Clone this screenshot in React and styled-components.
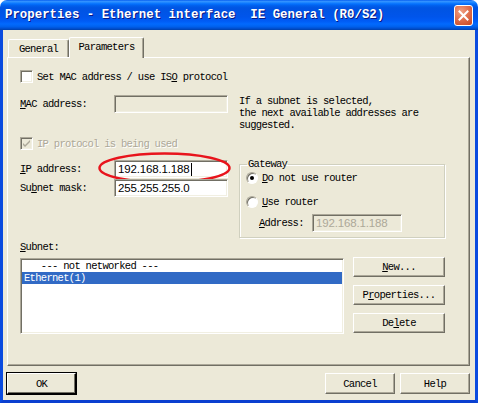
import React from 'react';
import styled, { createGlobalStyle } from 'styled-components';

const GlobalStyle = createGlobalStyle`
  html, body {
    margin: 0;
    padding: 0;
    background: #ffffff;
  }
  * {
    box-sizing: border-box;
  }
`;

const mono = `"Liberation Mono", "DejaVu Sans Mono", monospace`;

const Window = styled.div`
  width: 478px;
  height: 403px;
  display: flex;
  flex-direction: column;
  font-family: ${mono};
  font-size: 10.5px;
  letter-spacing: -0.7px;
  color: #000;
`;

const TitleBar = styled.div`
  height: 30px;
  flex: none;
  display: flex;
  align-items: center;
  justify-content: space-between;
  padding: 0 5px 0 5px;
  border-radius: 7px 7px 0 0;
  background: linear-gradient(
    to bottom,
    #0058ee 0%,
    #3593ff 4%,
    #288eff 7%,
    #127dff 10%,
    #036ffc 14%,
    #0262ee 18%,
    #0057e5 24%,
    #0054e3 30%,
    #0055eb 56%,
    #005bf5 70%,
    #026afe 80%,
    #0062ef 88%,
    #0052d6 94%,
    #0040ab 100%
  );
`;

const Title = styled.span`
  color: #fff;
  font-weight: bold;
  font-size: 12.4px;
  letter-spacing: 0;
  white-space: pre;
  text-shadow: 1px 1px 0 #0a1883;
`;

const CloseButton = styled.div`
  width: 19px;
  height: 21px;
  margin-top: 1px;
  border: 1px solid #fff;
  border-radius: 3px;
  background: radial-gradient(circle at 35% 30%, #f0a184 0%, #e0714f 45%, #c8451f 100%);
  display: flex;
  align-items: center;
  justify-content: center;
`;

const Frame = styled.div`
  flex: 1;
  display: flex;
  flex-direction: column;
  background: #ece9d8;
  border-left: 3px solid #0a4bdf;
  border-right: 3px solid #0a4bdf;
  border-bottom: 3px solid #0a3fd0;
  padding: 7px 5px 0 4px;
`;

const TabRow = styled.div`
  display: flex;
  align-items: flex-end;
  height: 20px;
  margin-left: 1px;
  position: relative;
  z-index: 1;
`;

const Tab = styled.div`
  height: ${(p) => (p.$active ? '21px' : '18px')};
  width: ${(p) => p.$w}px;
  margin-bottom: ${(p) => (p.$active ? '-1px' : '0')};
  padding-top: 3px;
  text-align: center;
  background: #ece9d8;
  border-top: 1px solid #fff;
  border-left: 1px solid #fff;
  border-right: 1px solid #716f64;
  box-shadow: inset -1px 0 0 #aca899;
  border-radius: 2px 2px 0 0;
`;

const Panel = styled.div`
  height: 309px;
  width: 463px;
  border-top: 1px solid #fff;
  border-left: 1px solid #fff;
  border-right: 1px solid #716f64;
  border-bottom: 1px solid #716f64;
  box-shadow: inset -1px -1px 0 #aca899;
  padding: 12px 0 0 12px;
  display: flex;
  flex-direction: column;
`;

const CheckRow = styled.label`
  display: flex;
  align-items: center;
  gap: 4px;
  height: 13px;
  color: ${(p) => (p.$disabled ? '#aca899' : '#000')};
  text-shadow: ${(p) => (p.$disabled ? '1px 1px 0 #fff' : 'none')};
  margin-top: ${(p) => p.$mt || 0}px;
`;

const CheckBox = styled.span`
  width: 13px;
  height: 13px;
  flex: none;
  background: ${(p) => (p.$disabled ? '#ece9d8' : '#fff')};
  border-top: 1px solid #aca899;
  border-left: 1px solid #aca899;
  border-right: 1px solid #fff;
  border-bottom: 1px solid #fff;
  box-shadow: inset 1px 1px 0 #716f64, inset -1px -1px 0 #f1efe2;
  display: flex;
  align-items: center;
  justify-content: center;
`;

const Split = styled.div`
  display: flex;
  margin-top: ${(p) => p.$mt}px;
`;

const LeftCol = styled.div`
  width: 219px;
  flex: none;
  display: flex;
  flex-direction: column;
`;

const FieldRow = styled.div`
  display: flex;
  align-items: center;
  height: 18px;
  margin-top: ${(p) => p.$mt || 0}px;
  margin-left: ${(p) => p.$ml || 0}px;
`;

const Label = styled.span`
  width: ${(p) => p.$w || 94}px;
  flex: none;
`;

const InputWrap = styled.div`
  position: relative;
  width: ${(p) => p.$w}px;
  height: ${(p) => p.$h || 18}px;
`;

const TextBox = styled.div`
  width: 100%;
  height: 100%;
  background: ${(p) => (p.$disabled ? '#ece9d8' : '#fff')};
  color: ${(p) => (p.$disabled ? '#aca899' : '#000')};
  border-top: 1px solid #aca899;
  border-left: 1px solid #aca899;
  border-right: 1px solid #fff;
  border-bottom: 1px solid #fff;
  box-shadow: inset 1px 1px 0 #716f64, inset -1px -1px 0 #f1efe2;
  padding: 0 0 0 3px;
  display: flex;
  align-items: center;
  font-family: "Liberation Sans", Arial, sans-serif;
  font-size: 11.5px;
  letter-spacing: -0.15px;
`;

const Caret = styled.span`
  display: inline-block;
  width: 1px;
  height: 13px;
  background: #000;
  margin-left: 1px;
`;

const Annotation = styled.svg`
  position: absolute;
  left: -16px;
  top: -8px;
  pointer-events: none;
`;

const Hint = styled.div`
  line-height: 12px;
  white-space: pre;
`;

const Group = styled.fieldset`
  margin: 21px 0 0 0;
  width: 206px;
  height: 80px;
  padding: 1px 0 0 6px;
  border: 1px solid #d0d0bf;
  box-shadow: inset 1px 1px 0 #fff, 1px 1px 0 #fff;
  display: flex;
  flex-direction: column;
`;

const Legend = styled.legend`
  padding: 0 1px;
  margin-left: 1px;
  line-height: 12px;
`;

const RadioRow = styled.label`
  display: flex;
  align-items: center;
  gap: 4px;
  height: 14px;
  margin-top: ${(p) => p.$mt || 0}px;
`;

const Radio = styled.span`
  width: 12px;
  height: 12px;
  flex: none;
  border-radius: 50%;
  background: #fff;
  border: 1px solid;
  border-color: #aca899 #fff #fff #aca899;
  box-shadow: inset 1px 1px 0 #716f64;
  display: flex;
  align-items: center;
  justify-content: center;

  &::after {
    content: '';
    width: 4px;
    height: 4px;
    border-radius: 50%;
    background: ${(p) => (p.$on ? '#000' : 'transparent')};
  }
`;

const SubnetLabel = styled.div`
  line-height: 12px;
  margin-top: 3px;
`;

const SubnetArea = styled.div`
  display: flex;
  gap: 9px;
  margin-top: 5px;
`;

const ListBox = styled.div`
  width: 324px;
  height: 76px;
  background: #fff;
  border-top: 1px solid #aca899;
  border-left: 1px solid #aca899;
  border-right: 1px solid #fff;
  border-bottom: 1px solid #fff;
  box-shadow: inset 1px 1px 0 #716f64, inset -1px -1px 0 #f1efe2;
  padding: 1px;
`;

const ListItem = styled.div`
  height: 12px;
  line-height: 12px;
  padding-left: 2px;
  white-space: pre;
  background: ${(p) => (p.$selected ? '#316ac5' : 'transparent')};
  color: ${(p) => (p.$selected ? '#fff' : '#000')};
`;

const ButtonCol = styled.div`
  display: flex;
  flex-direction: column;
  gap: 8px;
  margin-top: -1px;
`;

const Button = styled.div`
  width: ${(p) => p.$w || 92}px;
  height: ${(p) => p.$h || 20}px;
  display: flex;
  align-items: center;
  justify-content: center;
  background: #ece9d8;
  border-top: 1px solid #fff;
  border-left: 1px solid #fff;
  border-right: 1px solid #716f64;
  border-bottom: 1px solid #716f64;
  box-shadow: inset -1px -1px 0 #aca899;
  outline: ${(p) => (p.$default ? '1px solid #000' : 'none')};
  outline-offset: 0;
  ${(p) =>
    p.$default &&
    `border-right-color: #000; border-bottom-color: #000; box-shadow: inset -1px -1px 0 #716f64;`}
`;

const BottomBar = styled.div`
  display: flex;
  margin-top: 7px;
  gap: 5px;
`;

const Spacer = styled.div`
  flex: 1;
`;

const U = styled.span`
  text-decoration: underline;
  text-underline-offset: 1px;
`;

function Check() {
  return (
    <svg width="9" height="9" viewBox="0 0 9 9">
      <path d="M1 4 L3 6 L8 1 L8 3 L3 8 L1 6 Z" fill="#aca899" />
    </svg>
  );
}

export default function App() {
  return (
    <>
      <GlobalStyle />
      <Window>
        <TitleBar>
          <Title>Properties - Ethernet interface  IE General (R0/S2)</Title>
          <CloseButton>
            <svg width="11" height="11" viewBox="0 0 11 11">
              <path d="M1.5 1.5 L9.5 9.5 M9.5 1.5 L1.5 9.5" stroke="#fff" strokeWidth="2" strokeLinecap="square" />
            </svg>
          </CloseButton>
        </TitleBar>
        <Frame>
          <TabRow>
            <Tab $w={61}>General</Tab>
            <Tab $w={75} $active>Parameters</Tab>
          </TabRow>
          <Panel>
            <CheckRow>
              <CheckBox />
              <span>
                Set MAC address / use IS<U>O</U> protocol
              </span>
            </CheckRow>

            <Split $mt={12}>
              <LeftCol>
                <FieldRow>
                  <Label>
                    <U>M</U>AC address:
                  </Label>
                  <InputWrap $w={114}>
                    <TextBox $disabled />
                  </InputWrap>
                </FieldRow>
              </LeftCol>
              <Hint>{'If a subnet is selected,\nthe next available addresses are\nsuggested.'}</Hint>
            </Split>

            <Split $mt={6}>
              <LeftCol>
                <CheckRow $disabled>
                  <CheckBox $disabled>
                    <Check />
                  </CheckBox>
                  <span>IP protocol is being used</span>
                </CheckRow>
                <FieldRow $mt={10}>
                  <Label>
                    <U>I</U>P address:
                  </Label>
                  <InputWrap $w={114}>
                    <TextBox>
                      192.168.1.188
                      <Caret />
                    </TextBox>
                    <Annotation width="133" height="32" viewBox="0 0 133 32">
                      <ellipse cx="66.5" cy="16" rx="65" ry="14.5" fill="none" stroke="#e8141c" strokeWidth="2.5" />
                    </Annotation>
                  </InputWrap>
                </FieldRow>
                <FieldRow $mt={1}>
                  <Label>
                    Su<U>b</U>net mask:
                  </Label>
                  <InputWrap $w={114}>
                    <TextBox>255.255.255.0</TextBox>
                  </InputWrap>
                </FieldRow>
              </LeftCol>
              <Group>
                <Legend>Gateway</Legend>
                <RadioRow>
                  <Radio $on />
                  <span>
                    <U>D</U>o not use router
                  </span>
                </RadioRow>
                <RadioRow $mt={10}>
                  <Radio />
                  <span>
                    <U>U</U>se router
                  </span>
                </RadioRow>
                <FieldRow $mt={5} $ml={13}>
                  <Label $w={53}>
                    <U>A</U>ddress:
                  </Label>
                  <InputWrap $w={90}>
                    <TextBox $disabled>192.168.1.188</TextBox>
                  </InputWrap>
                </FieldRow>
              </Group>
            </Split>

            <SubnetLabel>
              <U>S</U>ubnet:
            </SubnetLabel>
            <SubnetArea>
              <ListBox>
                <ListItem>{'   --- not networked ---'}</ListItem>
                <ListItem $selected>Ethernet(1)</ListItem>
              </ListBox>
              <ButtonCol>
                <Button>
                  <span>
                    <U>N</U>ew...
                  </span>
                </Button>
                <Button>
                  <span>
                    P<U>r</U>operties...
                  </span>
                </Button>
                <Button>
                  <span>
                    De<U>l</U>ete
                  </span>
                </Button>
              </ButtonCol>
            </SubnetArea>
          </Panel>
          <BottomBar>
            <Button $w={69} $h={21} $default>
              OK
            </Button>
            <Spacer />
            <Button $w={70} $h={21}>
              Cancel
            </Button>
            <Button $w={70} $h={21}>
              Help
            </Button>
          </BottomBar>
        </Frame>
      </Window>
    </>
  );
}
